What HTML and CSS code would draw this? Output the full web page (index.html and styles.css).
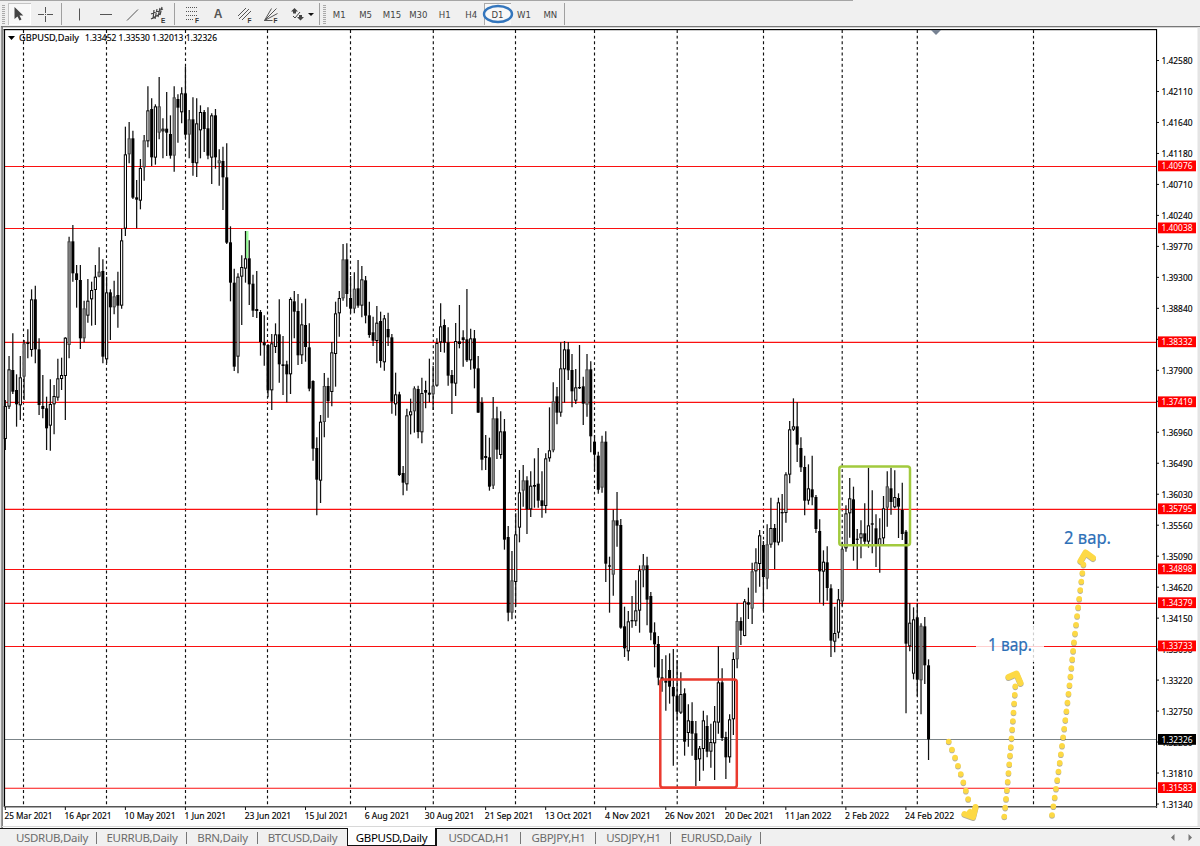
FILE: index.html
```
<!DOCTYPE html>
<html lang="en">
<head>
<meta charset="utf-8">
<title>GBPUSD,Daily</title>
<link rel="stylesheet" href="styles.css">
</head>
<body>
<header class="toolbar">
  <span class="grip"></span>
  <button class="tool w23 pressed"><svg width="23" height="22" viewBox="8 3 23 22"><path d="M14.5 7v12l3-2.6 2 4.2 2-1-2-4h3.8z" fill="#444"/></svg></button>
  <button class="tool w30"><svg width="30" height="22" viewBox="31 3 30 22"><path d="M38 14.5h6m3 0h6M45.5 7v6m0 3v6" stroke="#555"/><path d="M45 14.5h1" stroke="#555"/></svg></button>
  <span class="sep"></span>
  <button class="tool w30"><svg width="32" height="22" viewBox="62 3 32 22"><path d="M79.500 8.500v12" stroke="#555"/></svg></button>
  <button class="tool w27"><svg width="27" height="22" viewBox="92 3 27 22"><path d="M100 14.500h12" stroke="#555"/></svg></button>
  <button class="tool w27"><svg width="27" height="22" viewBox="119 3 27 22"><path d="M127 20.500l11-11" stroke="#555"/></svg></button>
  <button class="tool w28"><svg width="28" height="22" viewBox="146 3 28 22"><path d="M151 14l12-5M151 19l9-5M154 10l-1 9m4-10l-2 10m5-11l-2 9m4-10l-2 8" stroke="#444" stroke-width="1.200" fill="none"/><text x="161" y="22.500" class="sub">E</text></svg></button>
  <span class="sep"></span>
  <button class="tool w31"><svg width="31" height="22" viewBox="175 3 31 22"><path d="M186 7.500h12m-12 4h12m-12 4h12m-12 4h7" stroke="#555" stroke-dasharray="1 1"/><text x="195" y="22.500" class="sub">F</text></svg></button>
  <button class="tool w24 letter">A</button>
  <button class="tool w27"><svg width="27" height="22" viewBox="230 3 27 22"><path d="M238 16l8-8m-7 11l10-10m-7 11l9-9" stroke="#555"/><text x="247.500" y="22.500" class="sub">F</text></svg></button>
  <button class="tool w27"><svg width="27" height="22" viewBox="257 3 27 22"><path d="M264.500 20.500l7-12m-7 12l12-12m-12 12l13-7m-13 7h8" stroke="#555"/><text x="273.500" y="22.500" class="sub">F</text></svg></button>
  <button class="tool w35"><svg width="35" height="22" viewBox="284 3 35 22"><path d="M291 11.500l3.500-3.500 3.500 3.500h-2v2h-3v-2zM297 17h2v-2h3v2h2l-3.500 3.500z" fill="#444"/><path d="M293 16l2 2 5-6" fill="none" stroke="#444"/><path d="M308 13h6l-3 3z" fill="#111"/></svg></button>
  <span class="sep"></span>
  <span class="grip second"></span>
  <nav class="periods">
    <span>M1</span><span>M5</span><span>M15</span><span>M30</span><span>H1</span><span>H4</span><span class="current">D1<svg class="ring" width="32" height="20"><ellipse cx="16" cy="10" rx="14" ry="8"/></svg></span><span>W1</span><span>MN</span>
  </nav>
  <span class="sep"></span>
</header>
<main class="window">
  <svg id="chart" width="1200" height="802" viewBox="0 26 1200 802"></svg>
</main>
<footer class="tabs">
  <span class="tab">USDRUB,Daily</span>
  <span class="tab">EURRUB,Daily</span>
  <span class="tab brn">BRN,Daily</span>
  <span class="tab last">BTCUSD,Daily</span>
  <span class="tab active">GBPUSD,Daily</span>
  <span class="tab cad">USDCAD,H1</span>
  <span class="tab h1">GBPJPY,H1</span>
  <span class="tab h1">USDJPY,H1</span>
  <span class="tab">EURUSD,Daily</span>
  <svg class="scroll" width="40" height="18" viewBox="1160 828 40 18"><path d="M1174.500 833v7l-3.500-3.500zM1188.500 833v7l3.500-3.500z" fill="#777"/></svg>
</footer>
<script src="chart.js"></script>
</body>
</html>
```
FILE: styles.css
```
* { box-sizing: border-box; }
body {
  margin: 0;
  width: 1200px;
  height: 846px;
  overflow: hidden;
  display: flex;
  flex-direction: column;
  background: #f0f0f0;
  font-family: "Noto Sans", "DejaVu Sans Condensed", sans-serif;
}
.toolbar {
  height: 26px;
  flex: none;
  display: flex;
  align-items: center;
  padding: 2px 0 0 2px;
  background: linear-gradient(#a5a5a5, #a5a5a5) 0 0 / 853px 1px no-repeat, #f0f0f0;
}
.grip {
  width: 3px;
  height: 19px;
  margin-right: 3px;
  background: repeating-linear-gradient(#aaa 0 1px, #eee 1px 2px);
}
.grip.second { margin: 0 0 0 3px; }
.tool {
  height: 22px;
  padding: 0;
  border: 0;
  background: none;
  flex: none;
  overflow: hidden;
}
.tool svg { display: block; }
.pressed { background: #f8f8f8; box-shadow: inset 1px 1px #c4c4c4, inset -1px -1px #fff; }
.w23 { width: 23px; }
.w24 { width: 24px; }
.w27 { width: 27px; }
.w28 { width: 28px; }
.w30 { width: 30px; }
.w31 { width: 31px; }
.w35 { width: 35px; }
.letter { font: bold 12px "Liberation Sans", sans-serif; color: #555; }
.sub { font: bold 6.5px "Liberation Sans", sans-serif; fill: #333; }
.sep { width: 1px; height: 22px; background: #a0a0a0; flex: none; }
.periods {
  display: flex;
  height: 22px;
  margin-right: 0;
}
.periods span {
  width: 26.400px;
  text-align: center;
  font-family: "DejaVu Sans Condensed", sans-serif;
  font-size: 9.500px;
  line-height: 23px;
  color: #444;
}
.periods .current {
  position: relative;
  background: #f8f8f8;
  box-shadow: inset 1px 1px #aaa;
}
.ring { position: absolute; left: -2px; top: 1px; }
.ring ellipse { fill: none; stroke: #3476bd; stroke-width: 2.400; }

.window { height: 802px; flex: none; }
#chart { display: block; }
.axis { font-size: 9.800px; fill: #000; stroke: #000; stroke-width: .15; }
.tag { font-size: 9.800px; fill: #fff; }
.note { font-size: 17.500px; fill: #2d6fb7; stroke: #2d6fb7; stroke-width: .2; }
.level { stroke: #fb1010; stroke-width: 1.150; }
.period-line { stroke: #111; stroke-dasharray: 2.900 2.730; stroke-width: 1.150; }
.wick { stroke: #111; stroke-width: 1.250; }
.dots { fill: none; stroke: #fdd945; stroke-width: 5.600; stroke-linecap: round; stroke-dasharray: 0 8.700; }
.head { fill: none; stroke: #fdd945; stroke-width: 6; stroke-linecap: round; stroke-linejoin: round; }
.arrow { filter: drop-shadow(.5px 1px .5px rgba(90, 80, 30, .45)); }

.tabs {
  height: 18px;
  flex: none;
  display: flex;
  padding-left: 7px;
  border-top: 1px solid #111;
}
.tab {
  width: 90px;
  height: 17px;
  position: relative;
  text-align: center;
  font-size: 11.500px;
  letter-spacing: -.3px;
  line-height: 17px;
  white-space: nowrap;
  color: #6c6c6c;
  background: linear-gradient(#777, #777) 100% 3px / 1px 12px no-repeat;
}
.brn { width: 71px; }
.cad { width: 84px; }
.h1 { width: 75px; }
.last { background: none; width: 89px; }
.active {
  color: #000;
  background: #fff;
  border: solid #111;
  border-width: 0 2px 1px 1px;
  margin-top: -1px;
  height: 18px;
  line-height: 19px;
}
.scroll { margin-left: auto; }
```
FILE: chart.js
```
const out = [];
const line = (x1, y1, x2, y2, attrs) =>
  out.push(`<line x1="${x1}" y1="${y1}" x2="${x2}" y2="${y2}" ${attrs}/>`);
const rect = (x, y, w, h, attrs) =>
  out.push(`<rect x="${x}" y="${y}" width="${w}" height="${h}" ${attrs}/>`);
const text = (x, y, w, cls, str) =>
  out.push(`<text x="${x}" y="${y}" textLength="${w}" lengthAdjust="spacingAndGlyphs" class="${cls}" xml:space="preserve">${str}</text>`);

// window frame
rect(0, 26, 1200, 802, 'fill="#fff"');
rect(0, 26, 1.5, 802, 'fill="#e8e8e8"');
rect(1.2, 26, 1.8, 802, 'fill="#858585"');
rect(1, 26, 1199, 1.3, 'fill="#777"');
rect(1197.500, 27, 2.500, 800, 'fill="#e4e4e4"');
rect(2, 826, 1198, 1, 'fill="#d8d8d8"');

// period separators
[23.5, 106.5, 185.5, 267.5, 350.5, 433.3, 515.5, 594.5, 677.2, 763.5, 842.2, 917.3, 1033.5]
  .forEach(x => line(x, 30, x, 806, 'class="period-line"'));

// horizontal levels
const levels = [[166.5, '1.40976'], [228.5, '1.40038'], [342.4, '1.38332'], [402.4, '1.37419'],
  [509.4, '1.35795'], [569.5, '1.34898'], [603.3, '1.34379'], [646.5, '1.33733'], [788.2, '1.31583']];
levels.forEach(([y]) => line(5, y, 1156, y, 'class="level"'));
line(5, 739.5, 1156, 739.5, 'stroke="#7b8488"');
rect(245.500, 231, 3, 27, 'fill="#9cff9c"');

// candles: first index, base y, then high / body top / body bottom / low in thirds of a pixel + kind
const runs = [
[0, 60, `1020 1038 1137 1170 w|888 928 1040 1047 w|820 930 995 1002 b|943 990 1033 1100 b|888 952 1036 1080 w|840 850 950 1020 g|808 847 852 895 b|688 718 870 890 w|677 718 868 910 b|835 868 1035 1065 b|945 1038 1047 1075 b|1010 1045 1105 1170 b|958 1032 1097 1172 w|975 1008 1033 1123 w|896 955 1013 1022 w|893 945 957 990 w|832 833 948 1080 w|530 544 855 895 g|495 544 640 665 b|615 640 660 743 b|615 660 835 867 b|722 745 835 847 g|657 722 767 788 w|665 690 718 797 w|615 650 690 795 w|562 635 650 652 g|598 633 890 910 b|650 697 898 910 w|688 697 742 840 b|662 709 742 763 g|635 705 737 803 b|506 541 737 746 w|200 283 506 528 w|186 235 283 310 g|212 235 413 417 b|360 412 419 505 b|297 324 422 448 w|225 241 322 362 g|79 151 244 262 w|115 147 292 318 b|133 139 293 314 w|51 139 218 238 g|175 206 214 295 w|96 206 218 288 b|166 222 287 296 b|79 112 287 335 g|103 117 143 248 b|82 100 157 190 w|20 100 224 235 b|150 178 224 295 g|112 178 309 347 b|115 190 310 351 w|136 156 211 295 w|150 156 207 276 b|142 205 287 298 b|160 166 293 372 w|147 166 292 326 b|268 301 310 377 g|260 303 352 450 b|250 352 548 552 b|499 547 668 724 b|626 668 920 933 b|640 650 890 940 w|586 621 650 795 w|513 595 626 668 w|541 595 673 735 b|644 671 752 771 b|633 747 753 774 b`],
[68, 220, `270 276 366 407 b|286 367 376 437 b|372 375 511 532 b|342 370 511 570 w|310 343 381 399 w|238 343 433 488 b|348 433 438 525 b|422 433 463 547 b|232 237 463 522 w|213 244 275 355 b|222 273 406 435 b|250 313 406 432 w|236 315 381 425 b|310 382 506 514 b|481 483 686 722 b|652 684 779 886 b|585 605 782 849 w|459 498 606 652 g|473 498 543 593 b|366 397 516 559 w|245 280 402 500 w|213 234 280 350 w|72 118 235 242 g|70 118 222 260 b|168 234 266 280 b|157 206 266 280 g|120 205 257 263 b|138 178 257 292 w|168 181 287 310 b|245 286 345 353 b|290 337 362 378 b|258 308 363 430 w|275 303 423 443 b|285 295 427 452 w|278 327 352 378 b|342 352 545 581 b|458 523 553 587 w|515 523 765 768 b|738 759 788 826 b|566 586 793 812 w|536 574 586 643 w|499 505 574 638 g|497 507 636 655 b|473 519 637 670 w|482 510 518 565 b|416 518 524 547 b|437 497 523 570 g|355 369 497 500 w|250 319 367 396 w|298 315 368 398 b|322 367 467 497 b`],
[119, 280, `270 285 310 402 b|129 183 311 348 w|75 184 192 205 b|151 172 180 260 b|27 178 241 246 b|146 175 241 269 w|150 175 266 325 b|228 265 398 398 b|352 367 539 571 b|465 528 534 570 b|473 532 620 632 b|351 415 617 627 g|380 415 509 537 b|394 454 525 536 w|417 454 779 809 b|738 771 998 1024 b|813 901 998 1018 g|700 763 906 980 w|570 637 743 787 w|555 601 632 680 g|589 601 688 762 b|574 617 688 711 w|535 615 620 683 w|504 611 662 683 b|574 661 678 713 b|520 535 678 700 w|382 511 535 545 w|307 364 511 517 g|321 349 398 433 b|187 265 398 410 w|183 208 268 368 w|186 208 271 300 b|222 270 334 382 b|267 322 362 372 w|195 321 325 327 b|290 319 371 435 b|222 268 374 410 g|244 268 469 517 b|465 485 524 573 b|515 527 629 641 b|467 485 623 638 g|454 485 851 906 b|830 856 860 998 b|689 721 884 947 g|636 721 737 800 b|717 735 1043 1046 b`],
[165, 420, `560 619 685 711 b|573 604 694 722 w|528 600 604 623 b|481 571 604 618 w|436 451 572 638 w|402 436 451 502 g|410 436 539 616 b|516 528 638 661 b|607 637 673 742 b|648 672 773 796 b|717 772 778 815 b|706 781 788 872 b|700 750 800 851 b|687 801 829 1037 b|720 827 875 902 b|757 822 878 882 w|805 820 965 1007 b|853 901 939 980 w|847 903 941 1007 b|903 940 1020 1098 b|978 985 1018 1083 w|872 901 987 1052 w|886 918 995 1012 b|911 966 995 1043 w|858 904 970 1080 w|679 787 908 941 w|745 787 954 963 b|935 951 1012 1077 b|883 898 1012 1028 w|697 717 898 945 w|550 603 718 745 g|592 603 632 675 b|537 544 648 649 w|503 547 554 597 b|428 454 566 612 g|385 427 454 518 w|330 346 432 500 w|363 375 471 572 b|313 373 476 508 g|233 324 374 383 w|312 324 367 447 b|233 247 368 376 w|222 276 280 365 b|157 163 279 308 w|3 28 164 190 w`],
[210, 390, `25 109 119 123 w|37 109 164 216 b|142 174 232 246 b|197 231 332 376 b|223 295 332 344 w|197 298 322 346 b|315 321 417 429 b|388 423 544 638 b|481 515 545 647 w|469 517 594 632 b|583 595 752 801 b|650 729 755 787 w|597 628 728 745 w|455 477 634 648 g|346 370 475 485 w|264 325 370 443 w|290 328 462 512 b|417 446 449 538 b|391 430 445 505 w|340 430 455 468 b|233 406 455 473 w|301 400 404 490 b|373 415 465 531 b|385 445 465 548 w|318 355 445 462 w|244 289 353 410 g|233 295 336 374 b|241 321 352 355 w|310 324 350 444 b|278 360 432 450 b|420 425 761 970 b|640 698 769 784 w|652 688 851 868 w|640 682 869 918 b|700 707 871 973 g|681 709 826 882 b|808 826 1048 1110 b`]
];
const STEP = 3.753;
runs.forEach(([start, base, data]) => data.split('|').forEach((row, n) => {
  const [hi, top, bottom, lo, kind] = row.split(' ');
  const x = +(5.3 + STEP * (start + n)).toFixed(2);
  const y = v => +(base + v / 3).toFixed(2);
  const h = Math.max(1.2, (bottom - top) / 3);
  line(x, y(hi), x, y(lo), 'class="wick"');
  if (kind === 'b' || h < 2) {
    rect((x - 1.5).toFixed(2), y(top), 3, h.toFixed(2), 'fill="#000"');
  } else {
    const fill = kind === 'g' ? '#999' : '#fff';
    const edge = kind === 'g' ? '#444' : '#000';
    rect((x - 1.1).toFixed(2), y(+top + 1.5), 2.2, (h - 1).toFixed(2), `fill="${fill}" stroke="${edge}" stroke-width="1"`);
  }
}));

// plot border
rect(3.700, 29, 1.4, 778, 'fill="#000"');
rect(3.700, 29, 1153, 1.2, 'fill="#000"');
rect(1156, 29, 1.1, 779, 'fill="#000"');
rect(4, 806, 1153, 1.5, 'fill="#555"');
out.push('<path d="M931 30h10l-5 5z" fill="#778292"/><path d="M8 36h7l-3.500 4z" fill="#000"/>');
text(19, 41, 60, 'axis', 'GBPUSD,Daily');
text(85, 41, 132, 'axis', '1.33452 1.33530 1.32013 1.32326');

// price axis
['1.42580', '1.42110', '1.41640', '1.41180', '1.40710', '1.40240', '1.39770', '1.39300', '1.38840',
 '', '1.37900', '', '1.36960', '1.36490', '1.36030', '1.35560', '1.35090', '1.34620', '1.34150',
 '1.33690', '1.33220', '1.32750', '1.32280', '1.31810', '1.31340'].forEach((price, i) => {
  const y = 60.500 + i * 30.980;
  line(1157, y, 1159, y, 'stroke="#111"');
  if (price) text(1161.500, (y + 3.5).toFixed(1), 31, 'axis', price);
});
levels.forEach(([y, price]) => {
  rect(1158, y - 6, 38, 10.800, 'fill="#f00"');
  text(1161.500, y + 2.9, 31, 'tag', price);
});
rect(1158, 734, 38, 10.800, 'fill="#000"');
text(1161.500, 742.900, 31, 'tag', '1.32326');

// time axis
[[48, '25 Mar 2021'], [47, '16 Apr 2021'], [51, '10 May 2021'], [41.5, '1 Jun 2021'], [46.5, '23 Jun 2021'],
 [43.5, '15 Jul 2021'], [45, '6 Aug 2021'], [49.500, '30 Aug 2021'], [48.5, '21 Sep 2021'], [47.5, '13 Oct 2021'],
 [46, '4 Nov 2021'], [50.5, '26 Nov 2021'], [48.5, '20 Dec 2021'], [46.5, '11 Jan 2022'], [44, '2 Feb 2022'],
 [49, '24 Feb 2022']].forEach(([w, label], i) => {
  const x = 5.300 + i * 60.040;
  line(x, 807, x, 810, 'stroke="#111"');
  text((x - .8).toFixed(1), 819, w, 'axis', label);
});

// drawings
out.push('<rect x="660.300" y="679.600" width="76.500" height="107.800" rx="2.500" fill="none" stroke="#ea3a2e" stroke-width="2.500"/>');
out.push('<rect x="839.300" y="466.600" width="70.700" height="78.600" rx="2.500" fill="none" stroke="#a2ca3e" stroke-width="2.500"/>');
rect(976, 627, 68, 35, 'fill="#fff" fill-opacity=".8"');
text(988, 651, 44, 'note', '1 вар.');
text(1064, 544, 47, 'note', '2 вар.');
const arrow = (path, head) =>
  out.push(`<g class="arrow"><path class="dots" d="${path}"/><path class="head" d="${head}"/></g>`);
arrow('M948.700 741.500Q960 768 969.500 804', 'M964.500 814L973 817L975.500 807M970 812L973 815');
arrow('M1004.300 816.500Q1012 740 1015.500 683', 'M1008.500 677L1016.500 673.500L1020.500 683');
arrow('M1052 815Q1066 725 1074 642Q1079 600 1084 560', 'M1080.500 561L1085.500 552.500L1093 558');

document.getElementById('chart').innerHTML = out.join('');
```
